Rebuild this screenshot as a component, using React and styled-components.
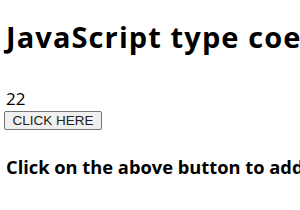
import React from "react";
import styled, { createGlobalStyle } from "styled-components";

const Global = createGlobalStyle`
  html, body { margin: 0; padding: 0; background: #fff; }
  body { overflow: hidden; }
`;

const Page = styled.div`
  width: 300px;
  height: 210px;
  padding: 19px 0 0 6px;
  box-sizing: border-box;
  font-family: "Open Sans", "Noto Sans", sans-serif;
  color: #000;
  white-space: nowrap;
  overflow: hidden;
`;

const Title = styled.h1`
  margin: 0;
  font-size: 29px;
  font-weight: 700;
  letter-spacing: 1.1px;
  line-height: 36px;
`;

const Result = styled.div`
  margin-top: 34px;
  font-size: 17px;
  line-height: 20px;
`;

const Button = styled.button`
  display: block;
  margin: 2px 0 0 -2px;
  width: 98px;
  height: 19px;
  padding: 0;
  font-family: "Liberation Sans", Arial, sans-serif;
  font-size: 13.5px;
  color: #222;
  background: #f0f0f0;
  border: 1px solid #767676;
  border-radius: 2px;
`;

const Note = styled.h3`
  margin: 26px 0 0 0;
  font-size: 18.3px;
  font-weight: 700;
  line-height: 22px;
`;

export default function App() {
  return (
    <Page>
      <Global />
      <Title>JavaScript type coercion</Title>
      <Result>22</Result>
      <Button>CLICK HERE</Button>
      <Note>Click on the above button to add two numbers</Note>
    </Page>
  );
}
